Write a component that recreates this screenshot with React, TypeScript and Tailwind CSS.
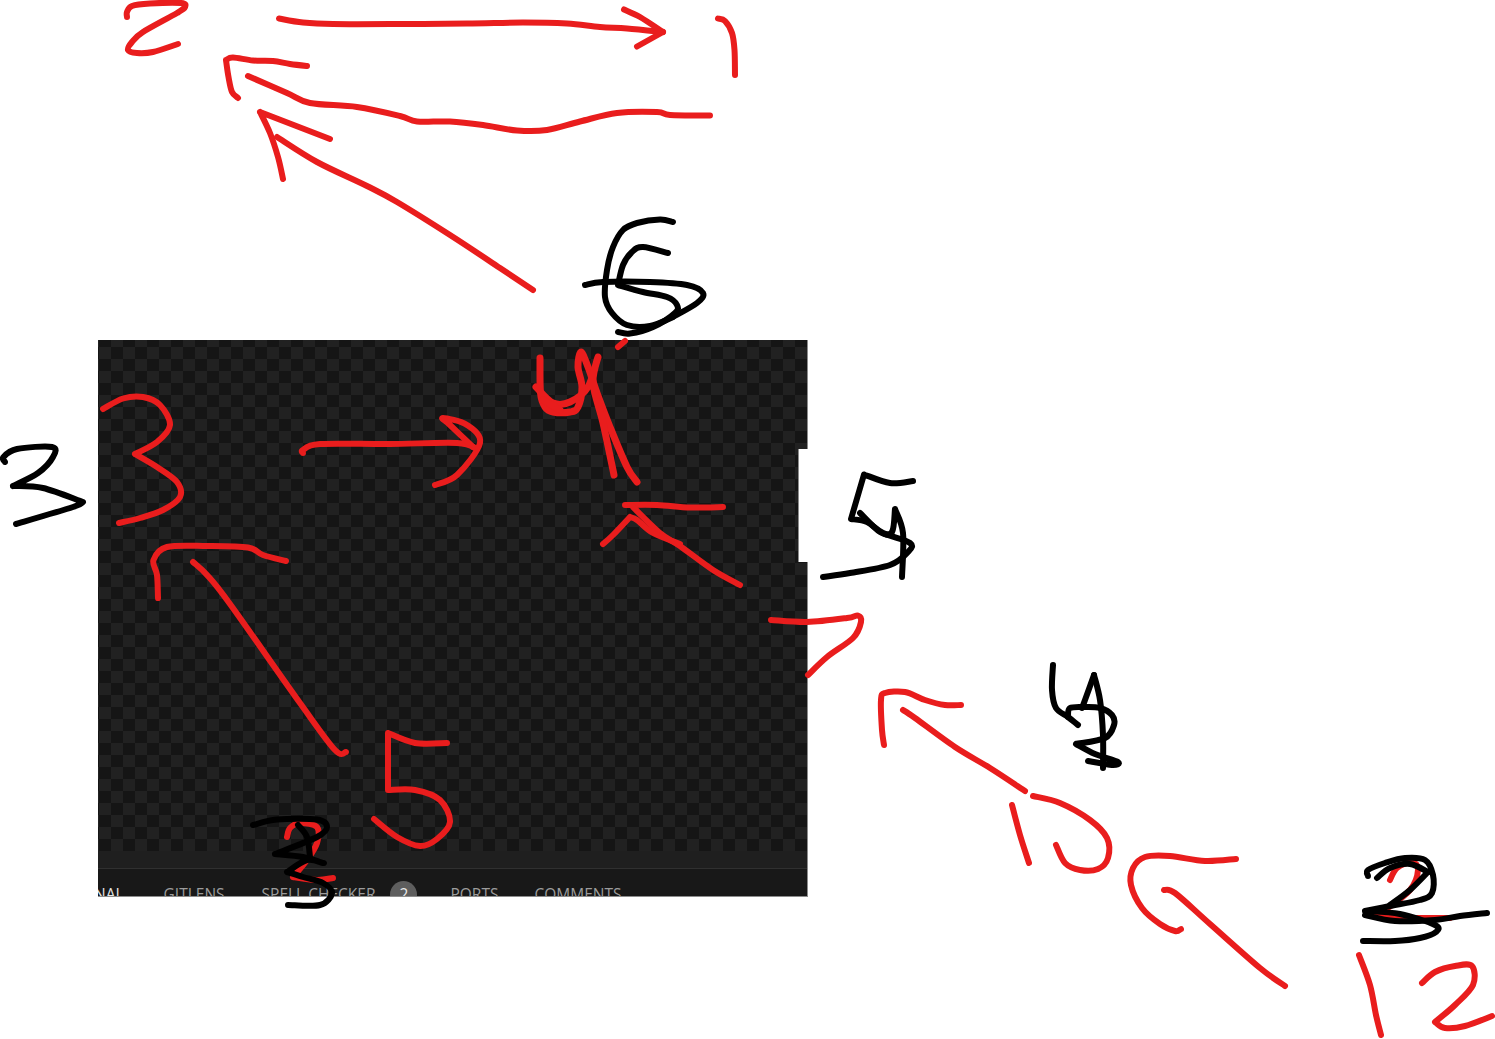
type Pt = [number, number]

// catmull-rom through the traced points, so the ink looks hand drawn
const smoothRun = (pts: Pt[]) => {
  let d = `M${pts[0][0]} ${pts[0][1]}`
  for (let i = 0; i < pts.length - 1; i++) {
    const p0 = pts[i - 1] ?? pts[i]
    const p1 = pts[i]
    const p2 = pts[i + 1]
    const p3 = pts[i + 2] ?? p2
    const c1x = p1[0] + (p2[0] - p0[0]) / 6
    const c1y = p1[1] + (p2[1] - p0[1]) / 6
    const c2x = p2[0] - (p3[0] - p1[0]) / 6
    const c2y = p2[1] - (p3[1] - p1[1]) / 6
    d += ` C${c1x.toFixed(1)} ${c1y.toFixed(1)} ${c2x.toFixed(1)} ${c2y.toFixed(1)} ${p2[0]} ${p2[1]}`
  }
  return d
}

// a point listed twice is a sharp corner: the curve restarts there
const smooth = (pts: Pt[]) => {
  const runs: Pt[][] = [[pts[0]]]
  for (let i = 1; i < pts.length; i++) {
    const prev = pts[i - 1]
    if (prev[0] === pts[i][0] && prev[1] === pts[i][1]) runs.push([pts[i]])
    else runs[runs.length - 1].push(pts[i])
  }
  return runs.map(smoothRun).join(' ')
}

const redStrokes: Pt[][] = [
  // 2
  [[127, 17], [127, 12], [132, 6], [150, 3.5], [181, 3], [185, 7], [177, 13], [143, 32], [132, 42], [128, 50], [137, 53], [153, 52], [178, 44]],
  // top arrow
  [[279, 18.5], [303, 22.5], [333, 24], [400, 24], [467, 23.5], [523, 22.5], [567, 23.5], [600, 27], [627, 28.5], [663, 32]],
  [[624, 9.5], [640, 17], [663, 32], [663, 32], [637, 46.5]],
  // 1
  [[718, 18.5], [725, 21], [732, 33], [734.5, 50], [735, 75]],
  // second arrow
  [[307, 66], [290, 64], [273, 61], [253, 60.5], [233, 57.5], [226, 60], [226, 60], [228.5, 77], [232, 92], [238, 98]],
  [[248, 76], [287, 93], [310, 103], [357, 107], [400, 116], [417, 121.5], [450, 121.5], [483, 125], [517, 130.5], [547, 130], [580, 121.5], [617, 113], [657, 112], [670, 115], [710, 115.5]],
  // third arrow
  [[330, 139], [260, 112], [260, 112], [270, 133], [278, 157], [283, 179]],
  [[277, 137], [317, 162], [367, 186], [397, 202], [450, 235], [500, 268], [533, 290]],
  [[618, 347], [625, 341]],
  // arrow to 4
  [[723, 507], [690, 507.5], [657, 505], [625, 505]],
  [[633, 507], [660, 533], [680, 546], [713, 570], [740, 585]],
  [[603, 544], [613, 535], [630, 517], [630, 517], [637, 520], [653, 533], [680, 544]],
  // 7
  [[771, 620], [807, 622], [847, 618], [858, 615.5], [861, 622], [853, 638], [827, 657], [808, 675]],
  // 3
  [[103, 409], [123, 398.5], [143, 397], [160, 405], [170, 425], [157, 442], [135, 454], [135, 454], [157, 467], [177, 482], [180, 497], [163, 510], [140, 518], [119, 523]],
  // arrow from 3 to 4
  [[303, 453], [303, 450], [320, 444], [390, 444], [457, 443], [477, 449]],
  [[435, 485], [457, 475], [480, 443], [467, 425], [443, 418], [450, 425], [473, 447]],
  // arrow to 3
  [[158, 598], [157, 575], [153.5, 560], [167, 547], [207, 546], [248, 547.5], [263, 555], [286, 561]],
  [[193, 562], [207, 575], [230, 604], [300, 703], [335, 750], [346, 752]],
  // 5
  [[447, 743], [415, 743], [388, 733], [388, 733], [388, 790], [388, 790], [415, 790], [440, 800], [450, 822], [437, 839], [420, 846], [397, 837], [374, 819]],
  // 2 under the black 3
  [[287, 837], [290, 828], [300, 823], [317, 827], [317, 843], [307, 860], [293, 877], [293, 877], [317, 880], [333, 878]],
  // arrow from 10
  [[961, 705], [945, 705], [925, 700], [905, 692], [885, 693], [881, 700], [882, 730], [884, 745]],
  [[903, 710], [915, 718], [955, 747], [990, 768], [1025, 791]],
  // 10
  [[1012, 805], [1020, 835], [1029, 863]],
  [[1033, 796], [1060, 803], [1090, 820], [1107, 838], [1108, 858], [1098, 869], [1080, 870], [1065, 863], [1056, 845]],
  // arrow from 12
  [[1236, 859], [1205, 861], [1170, 856], [1145, 857], [1133, 868], [1131, 885], [1142, 908], [1160, 924], [1175, 931], [1181, 929]],
  [[1164, 890], [1175, 893], [1210, 924], [1260, 968], [1285, 986]],
  // 12
  [[1359, 955], [1370, 985], [1376, 1015], [1381, 1035]],
  [[1422, 983], [1435, 972], [1455, 966], [1472, 966], [1473, 985], [1455, 1005], [1435, 1022], [1435, 1022], [1445, 1028], [1465, 1026], [1492, 1016]],
  // 2 under the black 3 bottom right
  [[1390, 880], [1397, 868], [1412, 862], [1418, 870], [1410, 890], [1385, 910], [1375, 916], [1400, 918], [1450, 918]],
]

// the red 4 was gone over several times, it reads heavier
const heavyRedStrokes: Pt[][] = [
  [[540, 358], [540.5, 393], [545, 407], [553, 412], [570, 412], [578, 407], [582, 387], [578, 367], [581, 352], [588, 367], [597, 393], [610, 427], [627, 467], [637, 482]],
  [[536, 387], [553, 403], [570, 402], [588, 387], [598, 357], [593, 383], [603, 423], [614, 475]],
  [[543, 400], [560, 410]],
]

const blackStrokes: Pt[][] = [
  // 6
  [[673, 222], [660, 219.5], [637, 223], [623, 230], [613, 247], [607, 270], [605, 297], [612, 313], [627, 325], [650, 326], [673, 317]],
  [[668, 253], [643, 247], [632, 252], [623, 265], [618, 285], [618, 285], [643, 292], [667, 297], [677, 305], [675, 313], [653, 327], [630, 333.5], [618, 332]],
  [[585, 285], [603, 282], [650, 282], [687, 285], [703, 293], [697, 303], [673, 317]],
  // 3 left
  [[5, 462], [3.5, 457], [17, 449], [52, 447], [53, 457], [38, 473], [13, 486], [13, 486], [43, 488], [83, 502], [83, 502], [73, 507], [16, 524]],
  // 5
  [[913, 481], [890, 483], [864, 474.5], [864, 474.5], [851, 519], [851, 519], [867, 522], [883, 533], [910, 543], [908, 552], [890, 565], [850, 573], [823, 577]],
  [[860, 513], [880, 532], [892, 532], [895, 509], [895, 509], [903, 533], [902, 577]],
  // 3 over the red 2
  [[253, 825], [277, 819.5], [317, 819.5], [327, 827], [317, 837], [275, 854], [275, 854], [303, 857], [320, 862], [323, 863], [307, 860], [287, 872], [287, 872], [303, 877], [323, 883], [332, 893], [320, 905], [288, 905]],
  [[298, 825], [307, 837], [310, 857]],
  // 4/2 scribble
  [[1053, 665], [1052, 690], [1056, 708], [1068, 717], [1078, 725]],
  [[1068, 717], [1070, 708], [1085, 707], [1100, 708], [1112, 715], [1114, 725], [1105, 738], [1076, 744], [1076, 744], [1095, 754], [1118, 762], [1112, 765], [1088, 761]],
  [[1094, 675], [1085, 700], [1082, 708]],
  [[1094, 675], [1100, 700], [1103, 735], [1103, 768]],
  // 3 bottom right, struck through
  [[1368, 876], [1368, 870], [1385, 863], [1405, 858], [1425, 860], [1433, 875], [1432, 893], [1420, 900], [1390, 906], [1365, 911], [1365, 911], [1400, 914], [1435, 925], [1436, 932], [1420, 938], [1395, 941], [1363, 941]],
  [[1377, 878], [1390, 868], [1410, 864], [1428, 872]],
  [[1428, 872], [1410, 890], [1390, 905]],
  [[1365, 915], [1395, 921], [1435, 920], [1460, 916], [1487, 913]],
]

const Ink = ({ strokes, color, width }: { strokes: Pt[][]; color: string; width: number }) => (
  <>
    {strokes.map((pts, i) => (
      <path
        key={i}
        d={smooth(pts)}
        fill="none"
        stroke={color}
        strokeWidth={width}
        strokeLinecap="round"
        strokeLinejoin="round"
      />
    ))}
  </>
)

export default function App() {
  return (
    <div className="relative h-[1039px] w-[1495px] overflow-hidden bg-white pl-[98px] pt-[340px] font-['Open_Sans',sans-serif]">
      <div className="relative flex h-[557px] w-[710px] flex-col border-r border-b border-[#8c8c8c]">
        <div className="flex-1 bg-[repeating-conic-gradient(#212121_0_25%,#151515_0_50%)] bg-size-[24px_24px] bg-position-[1px_-5px]" />
        <div className="h-[17px] bg-[#1f1f1f]" />
        <div className="h-[28px] overflow-hidden border-t border-[#303030] bg-[#181818]">
          <div className="-ml-[49px] flex items-center gap-9 pt-[12px] text-[15.5px] leading-[27px] whitespace-nowrap text-[#9c9c9c]">
            <span className="mr-1 text-[#e4e4e4]">TERMINAL</span>
            <span className="mr-px">GITLENS</span>
            <span className="-mr-[3px] flex items-center gap-[15px]">
              SPELL CHECKER
              <span className="flex size-[27px] items-center justify-center rounded-full bg-[#5e5e5e] text-[#e8e8e8]">
                2
              </span>
            </span>
            <span>PORTS</span>
            <span>COMMENTS</span>
          </div>
        </div>
        {/* notch in the right edge of the crop */}
        <div className="absolute top-[109px] right-[-1px] h-[113px] w-[10px] border-l border-[#8c8c8c] bg-white" />
      </div>
      <svg className="pointer-events-none absolute inset-0" width={1495} height={1039} viewBox="0 0 1495 1039">
        <Ink strokes={redStrokes} color="#e91d1d" width={6} />
        <Ink strokes={heavyRedStrokes} color="#e91d1d" width={7} />
        <Ink strokes={blackStrokes} color="#000000" width={6} />
      </svg>
    </div>
  )
}
